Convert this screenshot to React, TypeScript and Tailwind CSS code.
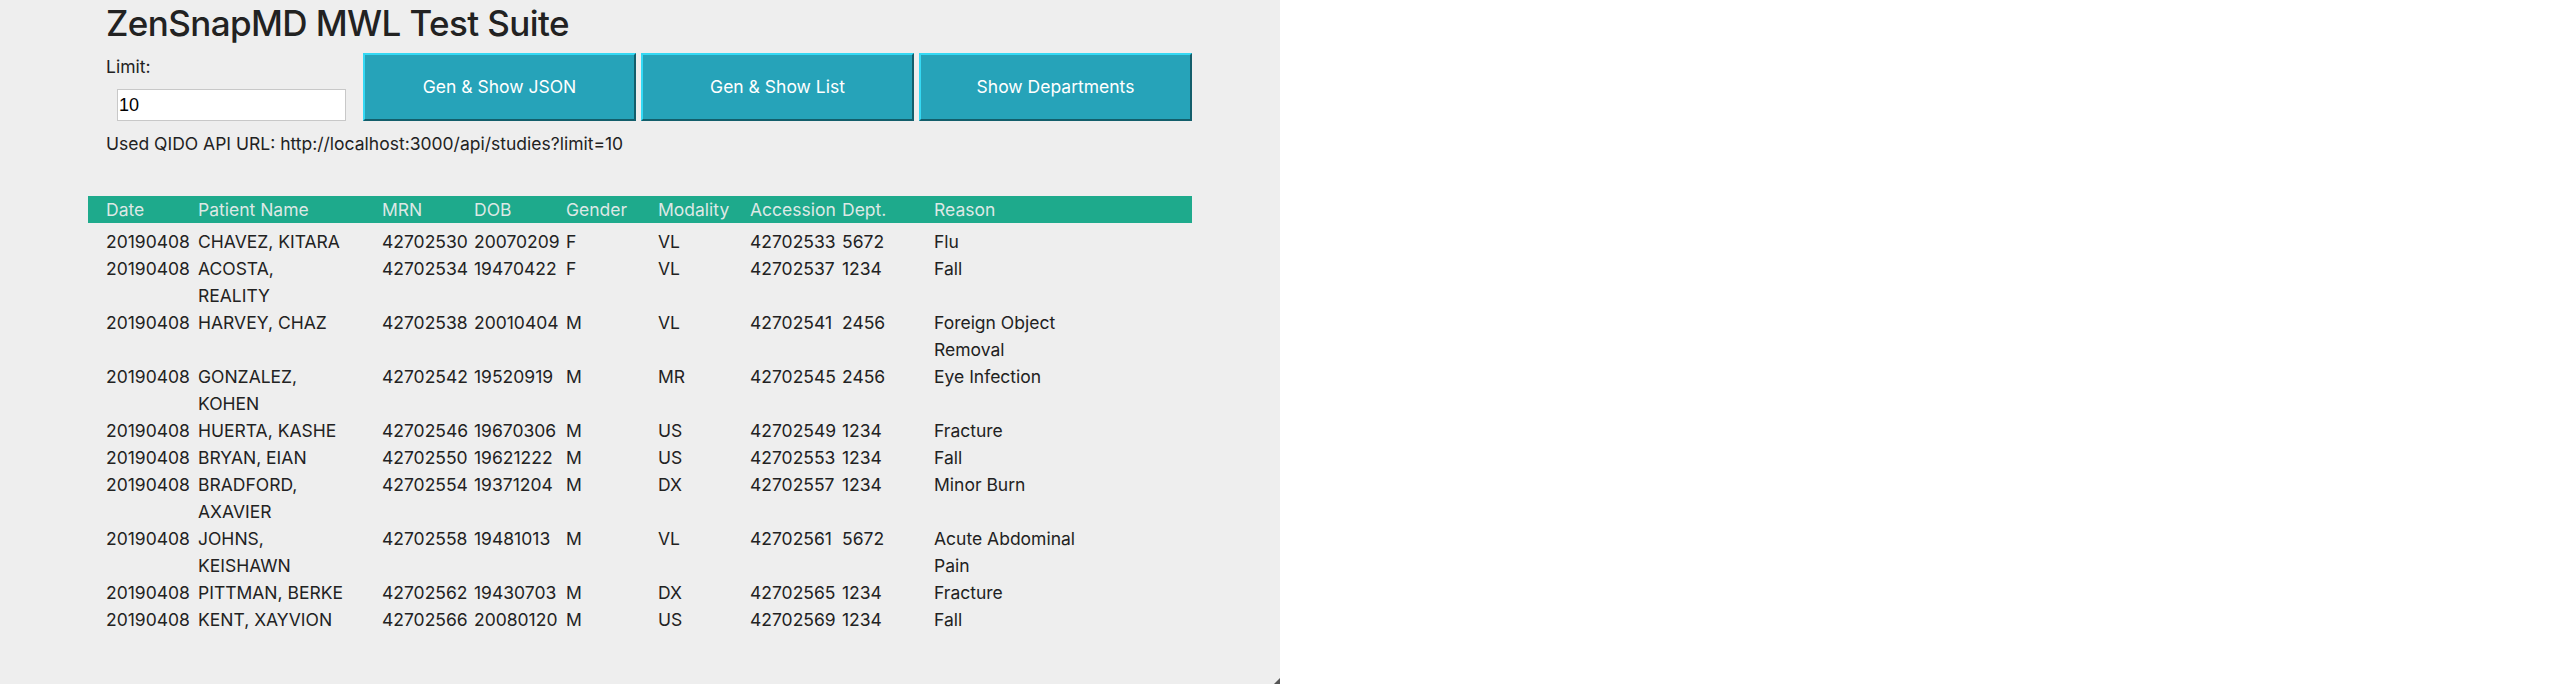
import React from "react";

type Row = {
  date: string;
  name: string;
  mrn: string;
  dob: string;
  gender: string;
  modality: string;
  accession: string;
  dept: string;
  reason: string;
};

const rows: Row[] = [
  { date: "20190408", name: "CHAVEZ, KITARA", mrn: "42702530", dob: "20070209", gender: "F", modality: "VL", accession: "42702533", dept: "5672", reason: "Flu" },
  { date: "20190408", name: "ACOSTA,\nREALITY", mrn: "42702534", dob: "19470422", gender: "F", modality: "VL", accession: "42702537", dept: "1234", reason: "Fall" },
  { date: "20190408", name: "HARVEY, CHAZ", mrn: "42702538", dob: "20010404", gender: "M", modality: "VL", accession: "42702541", dept: "2456", reason: "Foreign Object\nRemoval" },
  { date: "20190408", name: "GONZALEZ,\nKOHEN", mrn: "42702542", dob: "19520919", gender: "M", modality: "MR", accession: "42702545", dept: "2456", reason: "Eye Infection" },
  { date: "20190408", name: "HUERTA, KASHE", mrn: "42702546", dob: "19670306", gender: "M", modality: "US", accession: "42702549", dept: "1234", reason: "Fracture" },
  { date: "20190408", name: "BRYAN, EIAN", mrn: "42702550", dob: "19621222", gender: "M", modality: "US", accession: "42702553", dept: "1234", reason: "Fall" },
  { date: "20190408", name: "BRADFORD,\nAXAVIER", mrn: "42702554", dob: "19371204", gender: "M", modality: "DX", accession: "42702557", dept: "1234", reason: "Minor Burn" },
  { date: "20190408", name: "JOHNS,\nKEISHAWN", mrn: "42702558", dob: "19481013", gender: "M", modality: "VL", accession: "42702561", dept: "5672", reason: "Acute Abdominal\nPain" },
  { date: "20190408", name: "PITTMAN, BERKE", mrn: "42702562", dob: "19430703", gender: "M", modality: "DX", accession: "42702565", dept: "1234", reason: "Fracture" },
  { date: "20190408", name: "KENT, XAYVION", mrn: "42702566", dob: "20080120", gender: "M", modality: "US", accession: "42702569", dept: "1234", reason: "Fall" },
];

const cell = "px-[18px] whitespace-nowrap";
const wideCell = "col-span-2 px-[18px] whitespace-pre-line";

function TableRow({ r }: { r: Row }) {
  return (
    <div className="grid grid-cols-[repeat(12,92px)] leading-[27px] text-[#222222]">
      <div className={cell}>{r.date}</div>
      <div className={wideCell}>{r.name}</div>
      <div className={cell}>{r.mrn}</div>
      <div className={cell}>{r.dob}</div>
      <div className={cell}>{r.gender}</div>
      <div className={cell}>{r.modality}</div>
      <div className={cell}>{r.accession}</div>
      <div className={cell}>{r.dept}</div>
      <div className={wideCell}>{r.reason}</div>
    </div>
  );
}

function Btn({ children }: { children: React.ReactNode }) {
  return (
    <button className="w-[273px] h-[68px] bg-[#26a3b9] text-white text-[17.5px] border-2 border-t-[#35d9f4] border-l-[#35d9f4] border-b-[#135e6b] border-r-[#135e6b]">
      {children}
    </button>
  );
}

export default function App() {
  return (
    <div className="w-[2560px] h-[685px] bg-white" style={{ fontFamily: "Inter, 'Noto Sans', sans-serif" }}>
      <div className="relative w-[1280px] h-[684px] bg-[#eeeeee] text-[17.5px] text-[#222222] pl-[88px]">
        <h1 className="pl-[18px] pt-px text-[35px] leading-[44px] font-medium tracking-[-0.6px] text-[#222222]">
          ZenSnapMD MWL Test Suite
        </h1>
        <div className="flex mt-[8px] w-[1104px]">
          <div className="w-[275px] flex flex-col">
            <div className="pl-[18px] leading-[27px]">Limit:</div>
            <input
              readOnly
              value="10"
              className="mt-[9px] ml-[29px] w-[229px] h-[32px] bg-white border border-[#c8c8c8] px-[1px] text-[18px] text-black outline-none"
              style={{ fontFamily: "'Liberation Sans', Arial, sans-serif" }}
            />
          </div>
          <div className="flex gap-[5px]">
            <Btn>Gen &amp; Show JSON</Btn>
            <Btn>Gen &amp; Show List</Btn>
            <Btn>Show Departments</Btn>
          </div>
        </div>
        <div className="pl-[18px] mt-[9px] leading-[27px]">
          Used QIDO API URL: http://localhost:3000/api/studies?limit=10
        </div>
        <div className="mt-[39px] w-[1104px]">
          <div className="grid grid-cols-[repeat(12,92px)] h-[27px] leading-[27px] bg-[#1eaa8c] text-[#dde8e5]">
            <div className={cell}>Date</div>
            <div className={wideCell}>Patient Name</div>
            <div className={cell}>MRN</div>
            <div className={cell}>DOB</div>
            <div className={cell}>Gender</div>
            <div className={cell}>Modality</div>
            <div className={cell}>Accession</div>
            <div className={cell}>Dept.</div>
            <div className={wideCell}>Reason</div>
          </div>
          <div className="mt-[5px]">
            {rows.map((r, i) => (
              <TableRow key={i} r={r} />
            ))}
          </div>
        </div>
        <svg className="absolute right-0 bottom-0" width="6" height="6" viewBox="0 0 6 6">
          <path d="M6 0 L6 6 L0 6 Z" fill="#555555" />
        </svg>
      </div>
    </div>
  );
}
